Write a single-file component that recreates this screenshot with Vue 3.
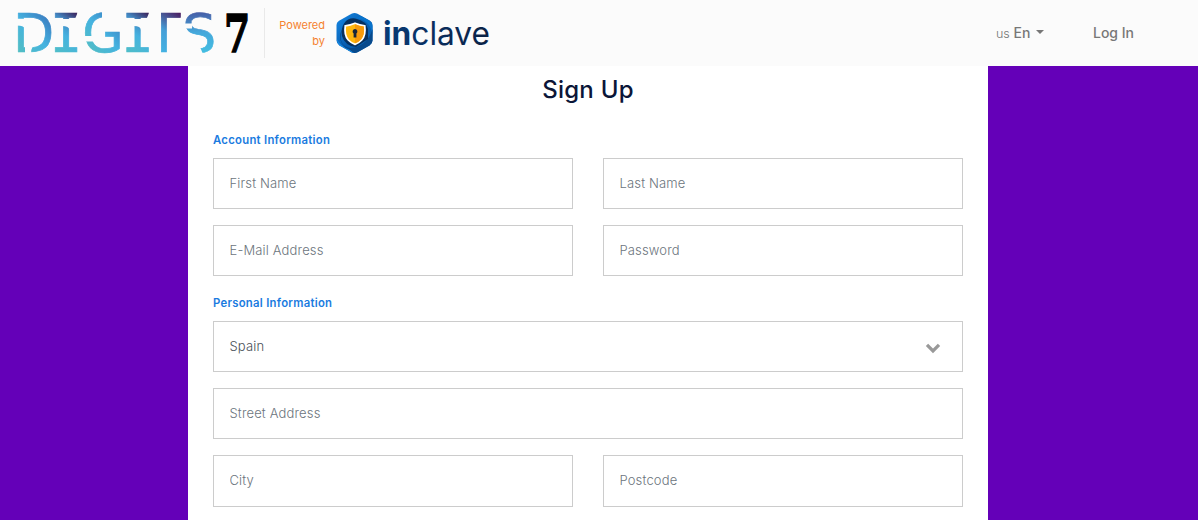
<script setup>
import { ref } from 'vue'

const country = ref('Spain')
const account = ['First Name', 'Last Name', 'E-Mail Address', 'Password']
</script>

<template>
  <div class="page">
    <header class="bar">
      <svg class="brand" width="250" height="66" viewBox="0 0 250 66" role="img" aria-label="Digits 7">
        <defs>
          <linearGradient id="bowl" gradientUnits="userSpaceOnUse" x1="5" y1="0" x2="40" y2="-34">
            <stop offset="0" stop-color="#52bec2" />
            <stop offset=".5" stop-color="#45b3e0" />
            <stop offset="1" stop-color="#3976bd" />
          </linearGradient>
          <linearGradient id="slab" gradientUnits="userSpaceOnUse" x1="2" y1="0" x2="27" y2="-40">
            <stop offset="0" stop-color="#50bfc6" />
            <stop offset=".45" stop-color="#45b2e0" />
            <stop offset=".72" stop-color="#4287c2" />
            <stop offset="1" stop-color="#3b1c55" />
          </linearGradient>
          <linearGradient id="tee" gradientUnits="userSpaceOnUse" x1="8" y1="0" x2="33" y2="-39">
            <stop offset="0" stop-color="#43b6e5" />
            <stop offset=".5" stop-color="#459fd7" />
            <stop offset="1" stop-color="#4b1c60" />
          </linearGradient>
          <linearGradient id="ess" gradientUnits="userSpaceOnUse" x1="0" y1="0" x2="0" y2="-40">
            <stop offset="0" stop-color="#43bde1" />
            <stop offset=".5" stop-color="#45a8db" />
            <stop offset="1" stop-color="#455ca6" />
          </linearGradient>
          <clipPath id="teeClip"><rect x="13.6" y="-50" width="40" height="60" /></clipPath>
        </defs>
        <g class="digits">
          <text transform="translate(12.9 52.3)" fill="url(#bowl)" stroke="url(#bowl)">D</text>
          <text class="mono" transform="translate(50 52.3)" fill="url(#slab)" stroke="url(#slab)">I</text>
          <text transform="translate(82.3 52.3)" fill="url(#bowl)" stroke="url(#bowl)">G</text>
          <text class="mono" transform="translate(121.5 52.3)" fill="url(#slab)" stroke="url(#slab)">I</text>
          <g transform="translate(147.4 52.3)" clip-path="url(#teeClip)"><text fill="url(#tee)" stroke="url(#tee)">T</text></g>
          <text transform="translate(182.2 52.3)" fill="url(#ess)" stroke="url(#ess)">S</text>
        </g>
        <g fill="#fbfbfb">
          <path d="M16 18.8H25.5V31Q25 26 20 25.8L16 25.5Z" />
          <path d="M25 46H33Q31 49 31 54H25Z" />
          <path d="M58 18.9H74V30H69.5Q69 26 62 26H58Z" />
          <path d="M74.5 20L78 12V20Z" />
          <path d="M130 18.9H146V30H141Q140.5 26 134 26H130Z" />
          <path d="M146 20L149.5 12V20Z" />
          <path d="M83 36H94V41.5H83Z" />
          <path d="M102 10H123V31H108L102 21Z" />
          <path d="M184 23.5H192V28.5H184Z" />
          <path d="M204 23H216V32H210L204 28Z" />
          <path d="M184 40H197L203 54H184Z" />
        </g>
        <text class="seven" transform="translate(224 52) scale(.71 1)">7</text>
      </svg>

      <div class="powered">Powered<br>by</div>

      <svg class="shield" width="37" height="42" viewBox="0 0 37 42" aria-hidden="true">
        <defs>
          <linearGradient id="hex" x1="0" y1="0" x2="1" y2="1">
            <stop offset="0" stop-color="#168ae8" />
            <stop offset=".55" stop-color="#075bad" />
            <stop offset="1" stop-color="#0b6abf" />
          </linearGradient>
        </defs>
        <path d="M15.5 1.8Q18.5.2 21.5 1.8L33.5 8.5Q36.5 10.2 36.5 13.5V28.5Q36.5 31.6 33.5 33.4L21.5 40.2Q18.5 41.8 15.5 40.2L3.5 33.4Q.5 31.6.5 28.5V13.5Q.5 10.2 3.5 8.5Z" fill="url(#hex)" />
        <path d="M17 7C28 4 37 14 36.5 26V14Q36 10 33 8.2L25 4Z" fill="#0873cc" />
        <path d="M7 16C1 29 8 38 18.5 35.5Q32 32 36.5 17V28.5Q36.5 31.6 33.5 33.4L21.5 40.2Q18.5 41.8 15.5 40.2L12 38C3 31 2 23 7 16Z" fill="#084a8c" />
        <path d="M6 24C4 12 12 4 21 7Q30 9 32 17V27L20 35Q9 34 6 24Z" fill="#06305f" />
        <path d="M1 27Q4 34 13 37.5L18 41Q16.5 41 15 40L3.5 33.4Q1 31.5 1 27Z" fill="#1687df" />
        <path d="M19 11.3Q23.5 13.3 28.7 13.8Q30 23 25.7 28Q22.7 31.2 19 32.3Q15.3 31.2 12.3 28Q8 23 9.3 13.8Q14.5 13.3 19 11.3Z" fill="#ffb70e" stroke="#fff" stroke-width="1.8" />
        <path d="M19 12.3Q23.5 14.2 27.8 14.6Q29 23 25 27.4Q22 30.4 19 31.3Z" fill="#f79a0c" />
        <path d="M19 17A2.5 2.5 0 0 1 20.4 21.5V25.5H17.6V21.5A2.5 2.5 0 0 1 19 17Z" fill="#17263a" />
      </svg>

      <svg class="inclave" width="112" height="40" viewBox="0 0 112 40" role="img" aria-label="inclave">
        <defs>
          <linearGradient id="navy" gradientUnits="userSpaceOnUse" x1="0" y1="0" x2="106" y2="0">
            <stop offset="0" stop-color="#073c77" />
            <stop offset=".5" stop-color="#0a2d5d" />
            <stop offset="1" stop-color="#0b2245" />
          </linearGradient>
        </defs>
        <text x="-1" y="32" fill="url(#navy)" textLength="107" lengthAdjust="spacingAndGlyphs"><tspan class="strong">in</tspan>clave</text>
      </svg>

      <nav class="links">
        <a class="lang"><small>us</small> En <i class="caret"></i></a>
        <a class="login">Log In</a>
      </nav>
    </header>

    <main class="card">
      <h1>Sign Up</h1>
      <h2>Account Information</h2>
      <div class="grid">
        <input v-for="label in account" :key="label" type="text" :placeholder="label">
      </div>
      <h2 class="second">Personal Information</h2>
      <div class="grid">
        <div class="select wide">
          <span>{{ country }}</span>
          <svg width="16" height="12" viewBox="0 0 16 12"><path d="M2 2.8L8 8.8L14 2.8" fill="none" stroke="#999" stroke-width="3.3" /></svg>
        </div>
        <input class="wide" type="text" placeholder="Street Address">
        <input type="text" placeholder="City">
        <input type="text" placeholder="Postcode">
      </div>
    </main>
  </div>
</template>

<style>
body { margin: 0; overflow: hidden; }
</style>

<style scoped>
.page {
  height: 520px;
  overflow: hidden;
  background: #6400b8;
  font-family: Inter, "Open Sans", sans-serif;
}
.bar {
  display: flex;
  align-items: center;
  height: 66px;
  background: #fbfbfb;
}
.brand { flex: none; }
.digits text { font: 53.5px "DejaVu Sans", sans-serif; stroke-width: .7px; }
.digits .mono { font-family: "DejaVu Sans Mono", monospace; }
.seven { font: bold 53px "DejaVu Serif", serif; fill: #000; stroke: #000; stroke-width: 1.4px; }
.powered {
  box-sizing: border-box;
  width: 61px;
  height: 50px;
  margin-left: 14px;
  padding-top: 9px;
  border-left: 1px solid #e9e9e9;
  font-size: 11px;
  line-height: 16px;
  text-align: right;
  color: #f5822f;
}
.shield { margin-left: 11px; }
.inclave { margin-left: 11px; overflow: visible; }
.inclave text { font: 33px Inter, sans-serif; }
.inclave .strong { font-weight: bold; }
.links {
  display: flex;
  align-items: center;
  justify-content: space-between;
  width: 138px;
  margin-left: auto;
  margin-right: 64px;
  padding-bottom: 1px;
  font-size: 14px;
  font-weight: 500;
  color: #777;
}
.lang { white-space: nowrap; }
.lang small { font-size: 12.5px; font-weight: 300; }
.caret {
  display: inline-block;
  margin-left: 2px;
  vertical-align: 4px;
  border: 4px solid transparent;
  border-top-color: #777;
  border-bottom: 0;
}
.card {
  box-sizing: border-box;
  width: 800px;
  height: 454px;
  margin-left: 188px;
  padding: 0 25px;
  background: #fff;
}
h1 {
  margin: 0;
  padding-top: 9px;
  font-size: 24px;
  line-height: 30px;
  font-weight: 500;
  letter-spacing: .25px;
  text-align: center;
  color: #0b1638;
}
h2 {
  margin: 27px 0 10px;
  font-size: 11.3px;
  line-height: 16px;
  font-weight: 600;
  letter-spacing: .28px;
  color: #1a7be0;
}
h2.second { margin: 18.6px 0 10px; }
.grid {
  display: grid;
  grid-template-columns: 1fr 1fr;
  grid-auto-rows: 51.2px;
  gap: 16px 30px;
}
.wide { grid-column: 1 / -1; }
input, .select {
  box-sizing: border-box;
  width: 100%;
  height: 100%;
  padding: 0 15.5px 2px;
  border: 1px solid #ccc;
  border-radius: 0;
  background: #fff;
  font: 300 13px Inter, "Open Sans", sans-serif;
  letter-spacing: .15px;
  color: #495057;
}
input::placeholder { color: #6c757d; opacity: 1; }
.select {
  display: flex;
  align-items: center;
  justify-content: space-between;
  padding-right: 21px;
}
.select svg { margin-top: 5px; }
</style>
